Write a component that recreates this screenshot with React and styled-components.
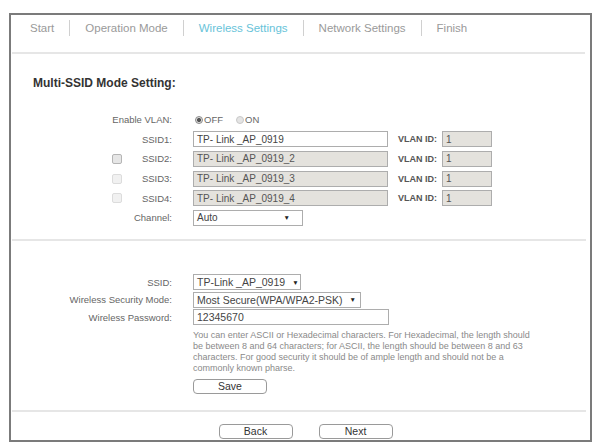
import React from "react";
import styled, { createGlobalStyle, css } from "styled-components";

const GlobalStyle = createGlobalStyle`
  body {
    margin: 0;
    background: #fff;
    font-family: "Liberation Sans", Arial, sans-serif;
  }
`;

const Frame = styled.div`
  box-sizing: border-box;
  margin: 13px 0 0 9px;
  width: 583px;
  height: 429px;
  border: 2px solid #7b7b7b;
  display: flex;
  flex-direction: column;
`;

const TabBar = styled.div`
  box-sizing: border-box;
  height: 39px;
  margin: 0 5px 0 1px;
  padding: 5px 0 0 18px;
  display: flex;
  align-items: flex-start;
  border-bottom: 2px solid #e6e6e6;
`;

const Tab = styled.div`
  font-size: 11.5px;
  line-height: 16px;
  padding: 0 15px;
  color: ${(p) => (p.$active ? "#68c3d9" : "#9a9a9a")};
  border-left: 1px solid #d0d0d0;
  &:first-child {
    border-left: none;
    padding-left: 0;
  }
`;

const Heading = styled.h3`
  margin: 22px 0 0 22px;
  font-size: 12px;
  line-height: 14px;
  font-weight: bold;
  color: #333;
`;

const Form = styled.div`
  display: flex;
  flex-direction: column;
  margin-top: ${(p) => p.$top}px;
`;

const Row = styled.div`
  display: flex;
  align-items: center;
  height: ${(p) => p.$h}px;
`;

const Label = styled.div`
  width: 161px;
  margin-right: 21px;
  display: flex;
  justify-content: flex-end;
  align-items: center;
  gap: 20px;
  font-size: 9.5px;
  color: #666;
  white-space: nowrap;
`;

const Box = styled.div`
  box-sizing: border-box;
  width: ${(p) => (p.$w ? `${p.$w}px` : "auto")};
  height: 16px;
  padding: 0 3px;
  display: flex;
  align-items: center;
  font-size: ${(p) => p.$fs || 10}px;
  color: #444;
  background: #fff;
  border: 1px solid #adadad;
  white-space: nowrap;
  ${(p) =>
    p.$off &&
    css`
      background: #e4e2dd;
      color: #555;
    `}
`;

const Select = styled(Box)`
  justify-content: space-between;
  padding-right: ${(p) => p.$pr || 5}px;
  gap: 7px;
`;

const Arrow = styled.span`
  font-size: 6.5px;
  color: #222;
`;

const VlanLabel = styled.span`
  margin: 0 5px 0 10px;
  font-size: 9px;
  font-weight: bold;
  color: #555;
`;

const Check = styled.span`
  box-sizing: border-box;
  width: 10px;
  height: 10px;
  border-radius: 2px;
  border: 1px solid ${(p) => (p.$dim ? "#dcdcdc" : "#b5b5b5")};
  background: ${(p) => (p.$dim ? "#f1f1f1" : "#e6e6e6")};
`;

const RadioGroup = styled.div`
  display: flex;
  align-items: center;
  gap: 13px;
  margin-left: 2px;
  font-size: 9.5px;
  color: #666;
`;

const RadioItem = styled.label`
  display: flex;
  align-items: center;
  gap: 1px;
`;

const Dot = styled.span`
  box-sizing: border-box;
  width: 8px;
  height: 8px;
  border-radius: 50%;
  border: 1px solid ${(p) => (p.$on ? "#8a8a8a" : "#c8c8c8")};
  background: ${(p) => (p.$on ? "radial-gradient(circle, #555 0 1.8px, #ddd 2.3px)" : "#e4e4e4")};
`;

const Divider = styled.div`
  margin: ${(p) => p.$top}px 4px 0 1px;
  height: 2px;
  background: #e6e6e6;
`;

const Hint = styled.p`
  margin: 4px 0 0 182px;
  font-size: 9px;
  line-height: 11px;
  color: #8a8a8a;
  white-space: nowrap;
`;

const Button = styled.button`
  box-sizing: border-box;
  width: 74px;
  height: 15px;
  padding: 0;
  font-family: inherit;
  font-size: 10.5px;
  line-height: 13px;
  color: #333;
  background: #fff;
  border: 1px solid #9a9a9a;
  border-radius: 4px;
`;

const SaveWrap = styled.div`
  margin: 2px 0 0 182px;
`;

const Footer = styled.div`
  display: flex;
  justify-content: center;
  gap: 26px;
  padding: 12px 0 0 10px;
`;

const tabs = ["Start", "Operation Mode", "Wireless Settings", "Network Settings", "Finish"];

const ssids = [
  { name: "SSID1:", value: "TP- Link _AP_0919" },
  { name: "SSID2:", value: "TP- Link _AP_0919_2", check: true },
  { name: "SSID3:", value: "TP- Link _AP_0919_3", check: true, dim: true },
  { name: "SSID4:", value: "TP- Link _AP_0919_4", check: true, dim: true },
];

export default function App() {
  return (
    <>
      <GlobalStyle />
      <Frame>
        <TabBar>
          {tabs.map((t) => (
            <Tab key={t} $active={t === "Wireless Settings"}>
              {t}
            </Tab>
          ))}
        </TabBar>

        <Heading>Multi-SSID Mode Setting:</Heading>

        <Form $top={20}>
          <Row $h={19.6}>
            <Label>Enable VLAN:</Label>
            <RadioGroup>
              <RadioItem>
                <Dot $on />
                OFF
              </RadioItem>
              <RadioItem>
                <Dot />
                ON
              </RadioItem>
            </RadioGroup>
          </Row>
          {ssids.map((s, i) => (
            <Row $h={19.6} key={s.name}>
              <Label>
                {s.check && <Check $dim={s.dim} />}
                {s.name}
              </Label>
              <Box $w={195} $off={i > 0}>
                {s.value}
              </Box>
              <VlanLabel>VLAN ID:</VlanLabel>
              <Box $w={50} $off>
                1
              </Box>
            </Row>
          ))}
          <Row $h={19.6}>
            <Label>Channel:</Label>
            <Select $w={110} $pr={12}>
              Auto<Arrow>▼</Arrow>
            </Select>
          </Row>
        </Form>

        <Divider $top={11} />

        <Form $top={33}>
          <Row $h={17.5}>
            <Label>SSID:</Label>
            <Select $w={108} $fs={10.5} $pr={3}>
              TP-Link _AP_0919<Arrow>▼</Arrow>
            </Select>
          </Row>
          <Row $h={17.5}>
            <Label>Wireless Security Mode:</Label>
            <Select $fs={10.5} $pr={4}>
              Most Secure(WPA/WPA2-PSK)<Arrow>▼</Arrow>
            </Select>
          </Row>
          <Row $h={17.5}>
            <Label>Wireless Password:</Label>
            <Box $w={196} $fs={10.5}>
              12345670
            </Box>
          </Row>
        </Form>

        <Hint>
          You can enter ASCII or Hexadecimal characters. For Hexadecimal, the length should
          <br />
          be between 8 and 64 characters; for ASCII, the length should be between 8 and 63
          <br />
          characters. For good security it should be of ample length and should not be a
          <br />
          commonly known pharse.
        </Hint>
        <SaveWrap>
          <Button>Save</Button>
        </SaveWrap>

        <Divider $top={16} />

        <Footer>
          <Button>Back</Button>
          <Button>Next</Button>
        </Footer>
      </Frame>
    </>
  );
}
